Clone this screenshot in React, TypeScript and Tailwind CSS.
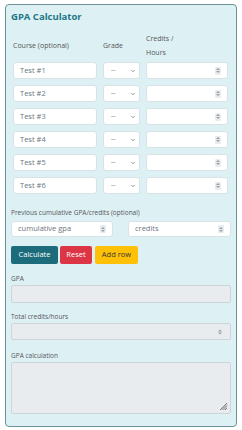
import { ChevronDown } from 'lucide-react'

const rows = ['Test #1', 'Test #2', 'Test #3', 'Test #4', 'Test #5', 'Test #6']

function Spinner({ bg = 'bg-[#e9ecef]' }: { bg?: string }) {
  return (
    <span className={`absolute right-[6px] top-1/2 -translate-y-1/2 w-[6px] h-[8px] rounded-[1px] ${bg} flex flex-col items-center justify-center gap-[1px]`}>
      <span className="block w-0 h-0 border-l-[2px] border-r-[2px] border-b-[2px] border-l-transparent border-r-transparent border-b-[#9aa0a6]" />
      <span className="block w-0 h-0 border-l-[2px] border-r-[2px] border-t-[2px] border-l-transparent border-r-transparent border-t-[#9aa0a6]" />
    </span>
  )
}

function Field({ placeholder, className }: { placeholder?: string; className?: string }) {
  return (
    <div className={`relative bg-white border border-[#d7e3e6] rounded-[3px] flex items-center pl-[6px] text-[7.5px] text-[#6c757d] ${className ?? ''}`}>
      {placeholder}
      <Spinner />
    </div>
  )
}

export default function App() {
  return (
    <div className="w-[242px] h-[430px] bg-white pt-[4px] px-[5px] font-['Open_Sans',sans-serif]">
      <div className="h-[423px] bg-[#ddf1f5] border border-[#6b9199] rounded-[4px] pl-[5px] pr-[5px] pt-[6px] flex flex-col">
        <h1 className="text-[9.5px] font-bold text-[#1e7687] leading-[12px]">GPA Calculator</h1>

        {/* header labels */}
        <div className="flex items-center mt-[12px] text-[7px] text-[#555] h-[22px] pl-[2px]">
          <div className="w-[90px]">Course (optional)</div>
          <div className="w-[43px]">Grade</div>
          <div className="leading-[14px]">
            Credits /<br />Hours
          </div>
        </div>

        {/* course rows */}
        <div className="flex flex-col gap-[6px] mt-[5px] pl-[2px]">
          {rows.map((r) => (
            <div key={r} className="flex gap-[6px] h-[17px]">
              <div className="w-[84px] bg-white border border-[#d7e3e6] rounded-[3px] flex items-center pl-[6px] text-[7.5px] text-[#6c757d]">
                {r}
              </div>
              <div className="w-[37px] bg-white border border-[#d7e3e6] rounded-[3px] flex items-center justify-between pl-[7px] pr-[3px] text-[7px] text-[#6c757d]">
                <span>--</span>
                <ChevronDown size={6} strokeWidth={3} className="text-[#777]" />
              </div>
              <Field className="w-[82px]" />
            </div>
          ))}
        </div>

        <div className="mt-[14px] text-[6.5px] text-[#555] leading-[10px]">
          Previous cumulative GPA/credits (optional)
        </div>
        <div className="flex gap-[15px] mt-[3px] h-[16px]">
          <Field className="w-[102px]" placeholder="cumulative gpa" />
          <Field className="w-[103px]" placeholder="credits" />
        </div>

        <div className="flex gap-[2px] mt-[9px] h-[18px] text-[7.5px]">
          <button className="w-[47px] bg-[#1c6c7b] text-white rounded-[2px]">Calculate</button>
          <button className="w-[32px] bg-[#dc3545] text-white rounded-[2px]">Reset</button>
          <button className="w-[43px] bg-[#ffc107] text-[#333] rounded-[2px] ml-[1px]">Add row</button>
        </div>

        <div className="mt-[10px] text-[6.5px] text-[#555] leading-[9px]">GPA</div>
        <div className="mt-[2px] h-[18px] w-[220px] bg-[#e9ecef] border border-[#ccd5d8] rounded-[2px]" />

        <div className="mt-[9px] text-[6.5px] text-[#555] leading-[9px]">Total credits/hours</div>
        <div className="relative mt-[2px] h-[17px] w-[220px] bg-[#e9ecef] border border-[#ccd5d8] rounded-[2px]">
          <span className="absolute right-[8px] top-1/2 -translate-y-1/2 flex flex-col gap-[1px]">
            <span className="block w-0 h-0 border-l-[2px] border-r-[2px] border-b-[2px] border-l-transparent border-r-transparent border-b-[#9aa0a6]" />
            <span className="block w-0 h-0 border-l-[2px] border-r-[2px] border-t-[2px] border-l-transparent border-r-transparent border-t-[#9aa0a6]" />
          </span>
        </div>

        <div className="mt-[11px] text-[6.5px] text-[#555] leading-[9px]">GPA calculation</div>
        <div className="relative mt-[2px] h-[52px] w-[220px] bg-[#e9ecef] border border-[#ccd5d8] rounded-[2px]">
          <svg className="absolute right-[2px] bottom-[2px]" width="9" height="9" viewBox="0 0 9 9">
            <path d="M8 1 L1 8 M8 3.5 L3.5 8 M8 6 L6 8" stroke="#777" strokeWidth="0.9" />
            <path d="M8 2.2 L2.2 8 M8 4.7 L4.7 8" stroke="#999" strokeWidth="0.7" />
          </svg>
        </div>
      </div>
    </div>
  )
}
